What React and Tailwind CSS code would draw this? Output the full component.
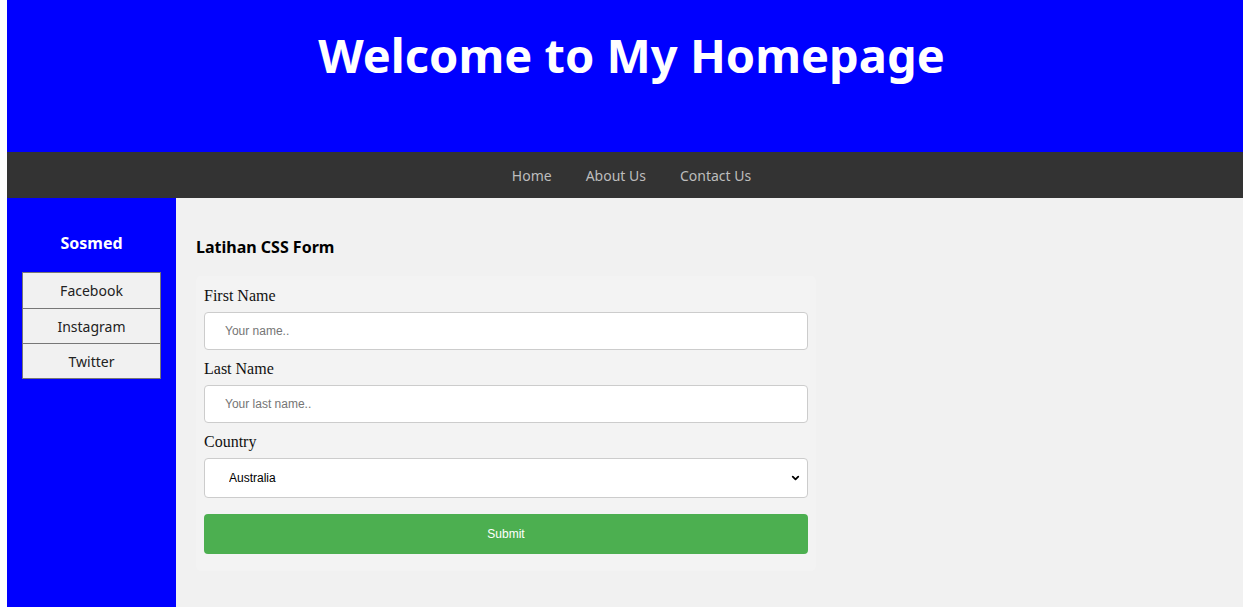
import { ChevronDown } from 'lucide-react';

const navLinks = ['Home', 'About Us', 'Contact Us'];
const sosmed = ['Facebook', 'Instagram', 'Twitter'];

const ui = { fontFamily: '"Noto Sans", "Open Sans", sans-serif' };
const serif = { fontFamily: '"Liberation Serif", "Times New Roman", serif' };
const arial = { fontFamily: '"Liberation Sans", Arial, sans-serif' };

const Label = ({ children, first }) => (
  <label
    className={`block text-[16px] text-[#111] leading-[20px] mb-[6px] ${first ? 'mt-0' : 'mt-[9px]'}`}
    style={serif}
  >
    {children}
  </label>
);

const Field = ({ label, placeholder, first }) => (
  <div>
    <Label first={first}>{label}</Label>
    <input
      type="text"
      placeholder={placeholder}
      className="w-full h-[38px] px-[20px] bg-white border border-[#ccc] rounded-[4px] text-[12px] placeholder:text-[#757575] outline-none"
      style={arial}
    />
  </div>
);

export default function App() {
  return (
    <div className="w-[1243px] h-[607px] overflow-hidden bg-white">
      <div className="ml-[7px] w-[1249px] h-full flex flex-col" style={ui}>
        {/* Header */}
        <header className="h-[152px] shrink-0 bg-[#0000ff] flex justify-center pt-[21px]">
          <h1 className="text-white font-bold text-[47px] leading-[68px]">Welcome to My Homepage</h1>
        </header>

        {/* Nav */}
        <nav className="h-[46px] shrink-0 bg-[#333] flex justify-center items-center">
          {navLinks.map((link) => (
            <a key={link} href="#" className="px-[17px] text-[14px] text-[#bdbdbd]">
              {link}
            </a>
          ))}
        </nav>

        {/* Body */}
        <div className="flex flex-1">
          <aside className="w-[169px] shrink-0 bg-[#0000ff] px-[15px] pt-[32px]">
            <h3 className="text-white font-bold text-[16px] text-center leading-[26px] mb-[16px]">Sosmed</h3>
            <ul className="border border-[#777] bg-[#f1f1f1]">
              {sosmed.map((item, i) => (
                <li
                  key={item}
                  className={`h-[35px] flex items-center justify-center text-[14px] text-[#222] ${i > 0 ? 'border-t border-[#777]' : ''}`}
                >
                  {item}
                </li>
              ))}
            </ul>
          </aside>

          <main className="flex-1 bg-[#f1f1f1] px-[20px] pt-[36px]">
            <h3 className="text-[16px] font-bold text-black leading-[26px] mb-[16px]">Latihan CSS Form</h3>
            <form className="w-[620px] bg-[#f3f3f3] px-[8px] pt-[10px] pb-[17px] rounded-[5px]">
              <Field first label="First Name" placeholder="Your name.." />
              <Field label="Last Name" placeholder="Your last name.." />
              <div>
                <Label>Country</Label>
                <div className="relative">
                  <select
                    className="w-full h-[40px] pl-[24px] appearance-none bg-white border border-[#ccc] rounded-[4px] text-[12px] text-black outline-none"
                    style={arial}
                    defaultValue="australia"
                  >
                    <option value="australia">Australia</option>
                    <option value="canada">Canada</option>
                    <option value="usa">USA</option>
                  </select>
                  <ChevronDown className="absolute right-[7px] top-1/2 -translate-y-1/2 w-[11px] h-[11px] text-black pointer-events-none" strokeWidth={4} />
                </div>
              </div>
              <button
                type="button"
                className="mt-[16px] w-full h-[40px] bg-[#4caf50] rounded-[4px] text-white text-[12px]"
                style={arial}
              >
                Submit
              </button>
            </form>
          </main>
        </div>
      </div>
    </div>
  );
}
